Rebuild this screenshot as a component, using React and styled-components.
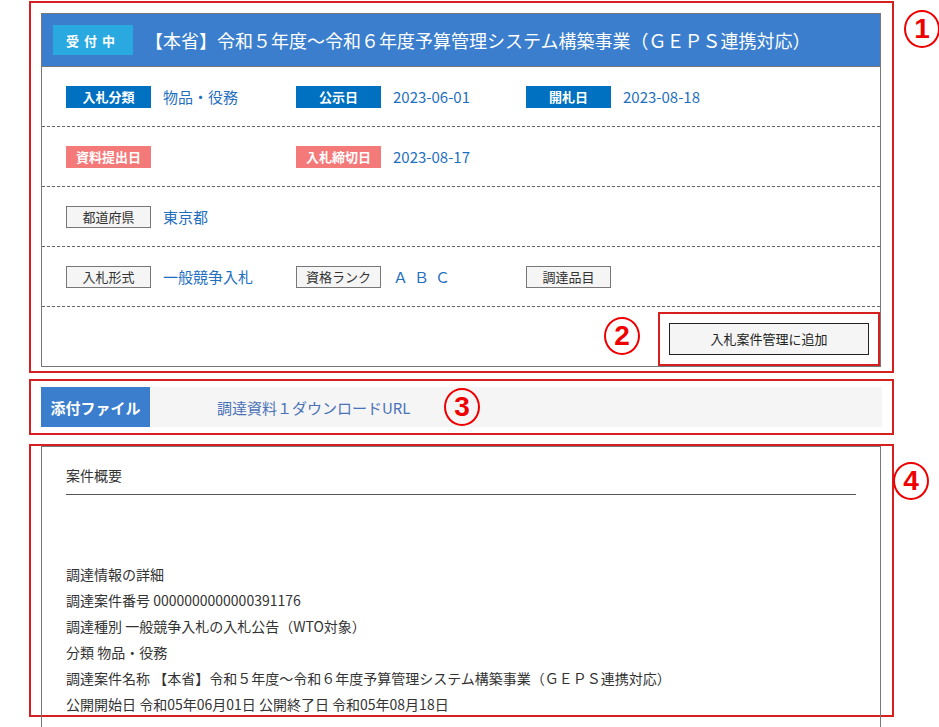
import React from "react";
import styled, { createGlobalStyle } from "styled-components";

const Global = createGlobalStyle`
  html, body { margin: 0; padding: 0; background: #fff; }
  body { font-family: "Noto Sans CJK JP", "Liberation Sans", sans-serif; color: #333; width: 939px; height: 727px; overflow: hidden; }
`;

const Page = styled.div`
  position: relative;
  padding: 1px 0 0 29px;
  width: 865px;
`;
const RedBox = styled.div`
  position: relative;
  border: 2px solid #d62020;
  padding: ${p => p.$pad || "10px"};
  margin-bottom: ${p => p.$mb || "0"};
  height: ${p => p.$h || "auto"};
  box-sizing: border-box;
`;
const Card = styled.div`
  border: 1px solid #777;
  background: #fff;
`;
const Header = styled.div`
  display: flex;
  align-items: center;
  gap: 12px;
  height: 52px;
  padding: 0 11px;
  background: #3a7ecd;
  border-bottom: 1px solid #777;
  color: #fff;
  font-size: 18px;
`;
const Status = styled.span`
  width: 80px;
  height: 30px;
  background: #29a9e0;
  color: #fff;
  font-size: 13px;
  font-weight: bold;
  letter-spacing: 5px;
  display: flex;
  align-items: center;
  justify-content: center;
`;
const Row = styled.div`
  display: flex;
  align-items: center;
  height: 59px;
  padding: 0 24px;
  border-bottom: ${p => (p.$last ? "none" : "1px dashed #666")};
  justify-content: ${p => (p.$end ? "flex-end" : "flex-start")};
`;
const Cell = styled.div`
  width: 230px;
  display: flex;
  align-items: center;
  gap: 12px;
`;
const Label = styled.span`
  width: 85px;
  height: 22px;
  box-sizing: border-box;
  display: flex;
  align-items: center;
  justify-content: center;
  font-size: 13px;
  background: ${p => (p.$kind === "blue" ? "#0070c0" : p.$kind === "pink" ? "#f47a7a" : "#f5f5f5")};
  color: ${p => (p.$kind ? "#fff" : "#333")};
  border: ${p => (p.$kind ? "none" : "1px solid #777")};
  font-weight: ${p => (p.$kind ? "bold" : "normal")};
`;
const Value = styled.span`
  color: #1f6fbf;
  font-size: 15px;
  letter-spacing: ${p => p.$ls || "0"};
`;
const Circle = styled.span`
  position: absolute;
  width: 36px;
  height: 38px;
  border: 2.5px solid #e00;
  border-radius: 50%;
  color: #e00;
  font: bold 28px "Liberation Sans", sans-serif;
  display: flex;
  align-items: center;
  justify-content: center;
  box-sizing: border-box;
  left: ${p => p.$x}px;
  top: ${p => p.$y}px;
`;
const BtnBox = styled.div`
  position: relative;
  border: 2px solid #d62020;
  padding: 9px;
  margin-right: -24px;
  margin-top: 4px;
`;
const Button = styled.button`
  width: 200px;
  height: 32px;
  background: #f5f5f5;
  border: 1px solid #222;
  font-family: inherit;
  font-size: 13px;
  color: #222;
`;
const FileBar = styled.div`
  display: flex;
  align-items: center;
  height: 40px;
  background: #f5f5f5;
`;
const FileTab = styled.div`
  width: 109px;
  height: 40px;
  background: #3a7ecd;
  color: #fff;
  font-size: 15px;
  font-weight: bold;
  display: flex;
  align-items: center;
  justify-content: center;
`;
const FileLink = styled.a`
  margin-left: 67px;
  color: #4a72b8;
  font-size: 15px;
`;
const Summary = styled.div`
  border: 1px solid #777;
  border-bottom: none;
  padding: 16px 24px 0;
  height: 400px;
`;
const SumTitle = styled.div`
  font-size: 14px;
  padding: 2px 0 9px;
  border-bottom: 1px solid #555;
  margin-bottom: 66px;
`;
const Line = styled.div`
  font-size: 14px;
  line-height: 26px;
  color: #333;
`;

export default function App() {
  return (
    <>
      <Global />
      <Page>
        <RedBox $pad="10px 11px 4px 10px" $mb="6px">
          <Card>
            <Header>
              <Status>受付中</Status>
              <span>【本省】令和５年度～令和６年度予算管理システム構築事業（ＧＥＰＳ連携対応）</span>
            </Header>
            <Row>
              <Cell><Label $kind="blue">入札分類</Label><Value>物品・役務</Value></Cell>
              <Cell><Label $kind="blue">公示日</Label><Value>2023-06-01</Value></Cell>
              <Cell><Label $kind="blue">開札日</Label><Value>2023-08-18</Value></Cell>
            </Row>
            <Row>
              <Cell><Label $kind="pink">資料提出日</Label></Cell>
              <Cell><Label $kind="pink">入札締切日</Label><Value>2023-08-17</Value></Cell>
            </Row>
            <Row>
              <Cell><Label>都道府県</Label><Value>東京都</Value></Cell>
            </Row>
            <Row>
              <Cell><Label>入札形式</Label><Value>一般競争入札</Value></Cell>
              <Cell><Label>資格ランク</Label><Value $ls="6px">ＡＢＣ</Value></Cell>
              <Cell><Label>調達品目</Label></Cell>
            </Row>
            <Row $last $end>
              <BtnBox>
                <Circle $x={-56} $y={3}>2</Circle>
                <Button>入札案件管理に追加</Button>
              </BtnBox>
            </Row>
          </Card>
          <Circle $x={873} $y={7}>1</Circle>
        </RedBox>
        <RedBox $pad="6px 10px 6px 10px" $mb="9px">
          <FileBar>
            <FileTab>添付ファイル</FileTab>
            <FileLink>調達資料１ダウンロードURL</FileLink>
          </FileBar>
          <Circle $x={413} $y={7}>3</Circle>
        </RedBox>
        <RedBox $pad="0 11px 0 10px" $h="273px">
          <Summary>
            <SumTitle>案件概要</SumTitle>
            <Line>調達情報の詳細</Line>
            <Line>調達案件番号 0000000000000391176</Line>
            <Line>調達種別 一般競争入札の入札公告（WTO対象）</Line>
            <Line>分類 物品・役務</Line>
            <Line>調達案件名称 【本省】令和５年度～令和６年度予算管理システム構築事業（ＧＥＰＳ連携対応）</Line>
            <Line>公開開始日 令和05年06月01日 公開終了日 令和05年08月18日</Line>
          </Summary>
          <Circle $x={862} $y={16}>4</Circle>
        </RedBox>
      </Page>
    </>
  );
}
